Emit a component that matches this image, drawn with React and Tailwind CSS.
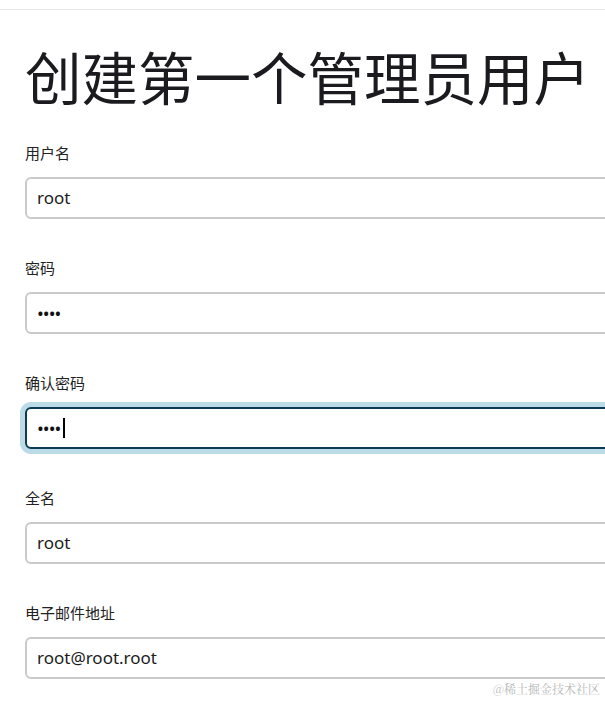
import React from 'react';

const fields = [
  { label: '用户名', value: 'root' },
  { label: '密码', value: '••••', secret: true },
  { label: '确认密码', value: '••••', secret: true, focused: true },
  { label: '全名', value: 'root' },
  { label: '电子邮件地址', value: 'root@root.root' },
];

const Field = ({ label, value, secret, focused }) => (
  <div className="mb-[37px]">
    <div className="h-6 leading-6 text-[15px] text-[#222] mb-3">{label}</div>
    <div
      className={
        focused
          ? 'w-[620px] h-[42px] rounded-[6px] border-2 border-[#0d3b54] shadow-[0_0_0_5px_#bcdbe9] bg-white flex items-center pl-[10px]'
          : 'w-[620px] h-[42px] rounded-[6px] border-2 border-[#cacaca] bg-white flex items-center pl-[10px]'
      }
    >
      {secret ? (
        <span className="text-[18px] tracking-[-0.9px] text-[#111] leading-none">{value}</span>
      ) : (
        <span className="text-[17px] text-[#1c1c1c]">{value}</span>
      )}
      {focused && <span className="ml-[3px] w-[2px] h-[20px] bg-black"></span>}
    </div>
  </div>
);

const App = () => {
  return (
    <div
      className="relative h-[701px] w-full overflow-hidden bg-white"
      style={{ fontFamily: '"Noto Sans", "Noto Sans CJK SC", sans-serif' }}
    >
      <div className="h-[10px] border-b border-[#e6e6e6]"></div>

      <main className="pl-[25px]">
        <h1 className="mt-[37px] mb-[30px] h-16 leading-[64px] text-[56.5px] font-normal text-[#1b1b1f] whitespace-nowrap">
          创建第一个管理员用户
        </h1>

        {fields.map((f) => (
          <Field key={f.label} {...f} />
        ))}
      </main>

      {/* watermark */}
      <div
        className="absolute right-[5px] bottom-[3px] text-[12px] text-[#b8b8b8]"
        style={{ fontFamily: '"Noto Serif CJK SC", "Noto Sans CJK SC", serif' }}
      >
        @稀土掘金技术社区
      </div>
    </div>
  );
};

export default App;
